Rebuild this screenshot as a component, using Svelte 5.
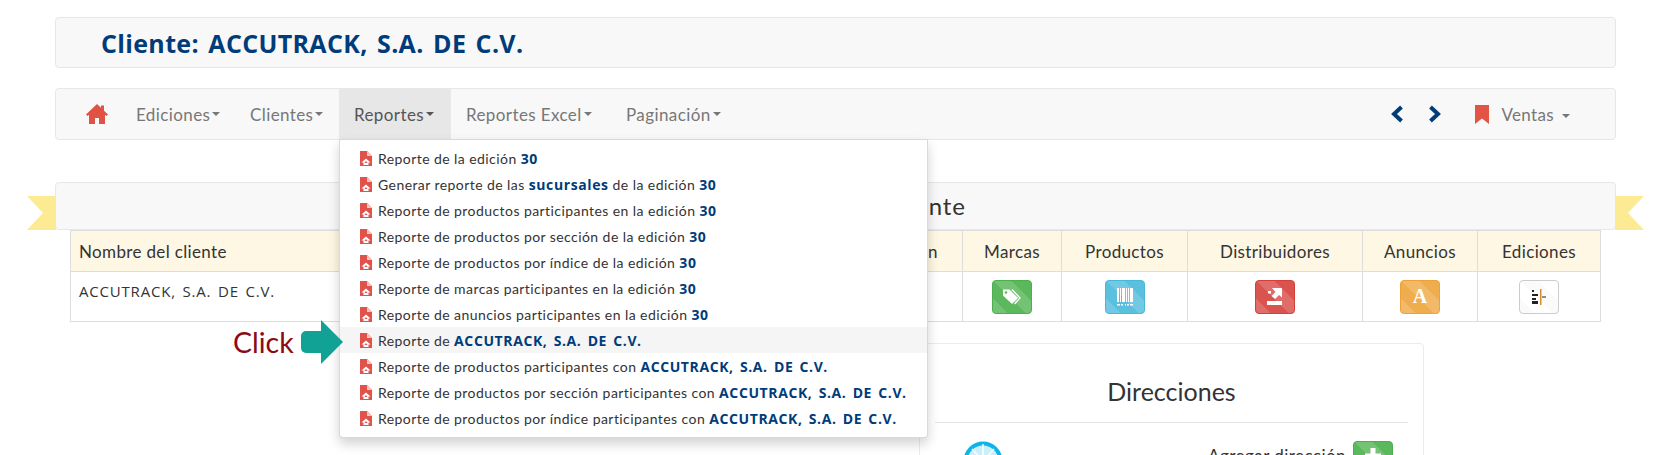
<script lang="ts">
  const cliente = 'ACCUTRACK, S.A. DE C.V.';
  const menu = [
    { label: 'Ediciones', w: 114 },
    { label: 'Clientes', w: 104 },
    { label: 'Reportes', w: 112 },
    { label: 'Reportes Excel', w: 160 },
    { label: 'Paginación', w: 119 }
  ];
  // each row: plain text, bold text, plain text, bold text
  const reportes = [
    ['Reporte de la edición ', '30', '', ''],
    ['Generar reporte de las ', 'sucursales', ' de la edición ', '30'],
    ['Reporte de productos participantes en la edición ', '30', '', ''],
    ['Reporte de productos por sección de la edición ', '30', '', ''],
    ['Reporte de productos por índice de la edición ', '30', '', ''],
    ['Reporte de marcas participantes en la edición ', '30', '', ''],
    ['Reporte de anuncios participantes en la edición ', '30', '', ''],
    ['Reporte de ', cliente, '', ''],
    ['Reporte de productos participantes con ', cliente, '', ''],
    ['Reporte de productos por sección participantes con ', cliente, '', ''],
    ['Reporte de productos por índice participantes con ', cliente, '', '']
  ];
  const columnas = [
    { titulo: 'Marcas', w: 99, btn: 'green', icon: 'tags' },
    { titulo: 'Productos', w: 126, btn: 'blue', icon: 'barcode' },
    { titulo: 'Distribuidores', w: 175, btn: 'red', icon: 'dist' },
    { titulo: 'Anuncios', w: 115, btn: 'orange', icon: 'ad' },
    { titulo: 'Ediciones', w: 123, btn: 'plain', icon: 'ed' }
  ];
</script>

<div class="page">
  <header class="panel title-panel">
    <h1>Cliente: {cliente}</h1>
  </header>

  <nav class="panel navbar">
    <ul class="nav-left">
      <li class="home">
        <svg width="22" height="22" viewBox="0 0 22 22" aria-hidden="true">
          <path fill="#e05244" d="M11 1 0 11.500l1.500 1.500L3 11.700V21h6v-6h4v6h6v-9.300l1.500 1.300L22 11.500 18 7.700V2.500h-3v2.300Z" />
        </svg>
      </li>
      {#each menu as item}
        <li class:active={item.label === 'Reportes'} style="width: {item.w}px">
          {item.label}<span class="caret"></span>
          {#if item.label === 'Reportes'}
            <ul class="dropdown">
              {#each reportes as [antes, fuerte, despues, fin]}
                <li class:hover={fuerte === cliente && antes === 'Reporte de '}>
                  <svg class="pdf" width="12" height="15" viewBox="0 0 12 15" aria-hidden="true">
                    <path fill="#e0524a" d="M0 0h7l5 5v10H0Z" />
                    <path fill="#f7c4bf" d="M7 0v5h5Z" />
                    <path fill="#fff" d="M6 7.500 10.500 11.500H8.500V14H3.500V11.500H1.500Z" />
                    <path fill="#e0524a" d="M6 10 7.500 12H4.500Z" />
                  </svg>
                  <span>{antes}<b>{fuerte}</b>{despues}<b>{fin}</b></span>
                </li>
              {/each}
            </ul>
          {/if}
        </li>
      {/each}
    </ul>
    <div class="nav-right">
      <svg class="chevron" width="14" height="20" viewBox="0 0 14 20" aria-hidden="true">
        <path fill="none" stroke="#003c7a" stroke-width="4" d="M11.500 3 4 10l7.500 7" />
      </svg>
      <svg class="chevron" width="14" height="20" viewBox="0 0 14 20" aria-hidden="true">
        <path fill="none" stroke="#003c7a" stroke-width="4" d="m2.500 3 7.500 7-7.500 7" />
      </svg>
      <svg class="bookmark" width="14" height="19" viewBox="0 0 14 19" aria-hidden="true">
        <path fill="#e25545" d="M0 0h14v19L7 13.500 0 19Z" />
      </svg>
      <span class="ventas">Ventas<span class="caret wide"></span></span>
    </div>
  </nav>

  <section class="panel ribbon-panel">
    <h2>Información del cliente</h2>
  </section>

  <table>
    <thead>
      <tr>
        <th class="name">Nombre del cliente</th>
        <th class="hidden-col">Sección</th>
        {#each columnas as col}
          <th style="width: {col.w}px">{col.titulo}</th>
        {/each}
      </tr>
    </thead>
    <tbody>
      <tr>
        <td class="name">{cliente}</td>
        <td></td>
        {#each columnas as col}
          <td class="center">
            <span class="btn {col.btn}">
              {#if col.icon === 'tags'}
                <svg width="20" height="18" viewBox="0 0 20 18" aria-hidden="true">
                  <path fill="#fff" d="M1 1.500h6.500L16 10l-6 6-9-8.500Z" />
                  <circle cx="4" cy="4.500" r="1.300" fill="#5cb85c" />
                  <path fill="none" stroke="#fff" stroke-width="1.300" d="M10 1.500l8 8.500-5.500 6" />
                </svg>
              {:else if col.icon === 'barcode'}
                <svg width="18" height="20" viewBox="0 0 18 20" aria-hidden="true">
                  <path fill="#fff" d="M1 1h2v14H1Zm3 0h1v14H4Zm2 0h3v14H6Zm4 0h1v14h-1Zm2 0h1v14h-1Zm2 0h3v14h-3ZM1 17h3v1.500H1Zm4 0h2v1.500H5Zm4 0h1v1.500H9Zm2 0h2v1.500h-2Zm3 0h3v1.500h-3Z" />
                </svg>
              {:else if col.icon === 'dist'}
                <svg width="20" height="20" viewBox="0 0 20 20" aria-hidden="true">
                  <path fill="#fff" d="M7 1h10v9.500l-3-2.500-4 4-3.500-3 4-4ZM2 14h15v4H2Z" />
                  <rect x="3" y="4" width="3" height="2.500" fill="#fff" />
                </svg>
              {:else if col.icon === 'ad'}
                <span class="letter">A</span>
              {:else}
                <svg width="16" height="16" viewBox="0 0 16 16" aria-hidden="true">
                  <path fill="#222" d="M1 1h2v2H1Zm0 4h6v2H1Zm0 4h4v2H1Zm0 3h6v3H1Z" />
                  <rect x="9" y="0" width="1.500" height="16" fill="#d98a2b" />
                  <path fill="#222" d="M11 7.500h4v1h-4Z" />
                </svg>
              {/if}
            </span>
          </td>
        {/each}
      </tr>
    </tbody>
  </table>

  <div class="click-hint">
    <span>Click</span>
    <svg width="42" height="44" viewBox="0 0 42 44" aria-hidden="true">
      <path fill="#12a195" d="M20 0 42 22 20 44V33H5a5 5 0 0 1-5-5V16a5 5 0 0 1 5-5h15Z" />
    </svg>
  </div>

  <section class="card">
    <h3>Direcciones</h3>
    <hr />
    <div class="card-row">
      <svg class="globe" width="40" height="40" viewBox="0 0 40 40" aria-hidden="true">
        <circle cx="20" cy="20" r="17.500" fill="#c9effb" stroke="#0db4e8" stroke-width="4" />
        <path fill="none" stroke="#fff" stroke-width="1.500" d="M20 3v34M3 20h34M9 8l22 24M31 8 9 32" />
      </svg>
      <div class="add">
        <span>Agregar dirección</span>
        <span class="btn green add-btn">
          <svg width="16" height="16" viewBox="0 0 16 16" aria-hidden="true">
            <path fill="#fff" d="M5.500 0h5v5.500H16v5h-5.500V16h-5v-5.500H0v-5h5.500Z" />
          </svg>
        </span>
      </div>
    </div>
  </section>
</div>

<style>
  :global(body) {
    background: #fff;
  }

  .page {
    position: relative;
    box-sizing: border-box;
    height: 455px;
    padding: 17px 56px 0 55px;
    overflow: hidden;
    color: #333;
    font-family: Lato, sans-serif;
    font-size: 14px;
  }

  .panel {
    box-sizing: border-box;
    border: 1px solid #e7e7e7;
    border-radius: 4px;
    background: #f8f8f8;
  }

  .title-panel {
    display: flex;
    align-items: center;
    height: 51px;
    padding-left: 45px;
  }

  h1 {
    margin: 0;
    color: #003c7a;
    font-family: 'Open Sans', sans-serif;
    font-size: 25px;
    font-weight: 700;
    letter-spacing: 0.35px;
    word-spacing: 2.500px;
  }

  .navbar {
    display: flex;
    justify-content: space-between;
    height: 52px;
    margin-top: 20px;
    padding: 0 45px 0 15px;
    color: #777;
    font-size: 17px;
  }

  .navbar ul {
    margin: 0;
    padding: 0;
    list-style: none;
  }

  .nav-left {
    display: flex;
  }

  .nav-left > li {
    position: relative;
    box-sizing: border-box;
    display: flex;
    align-items: center;
    padding: 0 15px;
    letter-spacing: 0.4px;
    white-space: nowrap;
  }

  .nav-left > li.home {
    padding: 0 12px 0 15px;
    width: 50px;
  }

  .nav-left > li.active {
    background: #e7e7e7;
    color: #555;
  }

  .caret {
    display: inline-block;
    margin-left: 2px;
    border-top: 4px solid currentColor;
    border-right: 4px solid transparent;
    border-left: 4px solid transparent;
    vertical-align: middle;
  }

  .caret.wide {
    margin-left: 8px;
  }

  .dropdown {
    position: absolute;
    top: 100%;
    left: 0;
    z-index: 5;
    box-sizing: border-box;
    width: 589px;
    padding: 5px 0 6px !important;
    border: 1px solid rgba(0, 0, 0, 0.15);
    border-radius: 0 0 4px 4px;
    background: #fff;
    box-shadow: 0 6px 12px rgba(0, 0, 0, 0.175);
    color: #333;
    font-size: 14px;
    letter-spacing: 0.43px;
  }

  .dropdown li {
    display: flex;
    align-items: center;
    gap: 6px;
    height: 26px;
    padding-left: 20px;
  }

  .dropdown li.hover {
    background: #f5f5f5;
  }

  .dropdown b {
    color: #003c7a;
    font-family: 'Open Sans', sans-serif;
    font-size: 14px;
    font-weight: 700;
    letter-spacing: 0.6px;
    word-spacing: 2px;
  }

  .nav-right {
    display: flex;
    align-items: center;
  }

  .chevron {
    margin-right: 24px;
  }

  .bookmark {
    margin-left: 9px;
    margin-right: 12px;
  }

  .ventas {
    letter-spacing: 0.35px;
  }

  .ribbon-panel {
    position: relative;
    display: flex;
    align-items: center;
    justify-content: center;
    height: 48px;
    margin-top: 42px;
    padding-bottom: 2px;
  }

  .ribbon-panel::before,
  .ribbon-panel::after {
    content: '';
    position: absolute;
    top: 13px;
    bottom: -1px;
    width: 29px;
    background: #fdeb93;
  }

  .ribbon-panel::before {
    left: -29px;
    clip-path: polygon(0 0, 100% 0, 100% 100%, 0 100%, 55% 50%);
  }

  .ribbon-panel::after {
    right: -29px;
    clip-path: polygon(0 0, 100% 0, 45% 50%, 100% 100%, 0 100%);
  }

  h2 {
    margin: 0;
    font-family: Lato, sans-serif;
    font-size: 24px;
    font-weight: 400;
    letter-spacing: 0.9px;
  }

  table {
    width: 1530px;
    margin: 0 0 0 15px;
    border-collapse: collapse;
    table-layout: fixed;
    font-size: 17px;
  }

  th,
  td {
    box-sizing: border-box;
    border: 1px solid #ddd;
    padding: 0 8px;
  }

  th {
    height: 41px;
    background: #fdf7e3;
    font-weight: 400;
    letter-spacing: 0.35px;
  }

  td {
    height: 50px;
  }

  th.name,
  td.name {
    width: 783px;
    text-align: left;
  }

  td.name {
    vertical-align: top;
    padding-top: 9px;
    font-family: 'Open Sans', sans-serif;
    font-size: 15px;
    letter-spacing: 0.8px;
    word-spacing: 2px;
  }

  .hidden-col {
    width: 109px;
  }

  .center {
    text-align: center;
  }

  .btn {
    box-sizing: border-box;
    display: inline-flex;
    align-items: center;
    justify-content: center;
    width: 40px;
    height: 34px;
    border: 1px solid;
    border-radius: 4px;
    background-image: linear-gradient(
      45deg,
      rgba(255, 255, 255, 0.15) 25%,
      transparent 25%,
      transparent 50%,
      rgba(255, 255, 255, 0.15) 50%,
      rgba(255, 255, 255, 0.15) 75%,
      transparent 75%
    );
    background-size: 36px 36px;
    vertical-align: middle;
  }

  .green {
    border-color: #4cae4c;
    background-color: #5cb85c;
  }

  .blue {
    border-color: #46b8da;
    background-color: #5bc0de;
  }

  .red {
    border-color: #d43f3a;
    background-color: #d9534f;
  }

  .orange {
    border-color: #eea236;
    background-color: #f0ad4e;
  }

  .plain {
    border-color: #ccc;
    background-color: #fff;
    background-image: linear-gradient(
      45deg,
      rgba(0, 0, 0, 0.02) 25%,
      transparent 25%,
      transparent 50%,
      rgba(0, 0, 0, 0.02) 50%,
      rgba(0, 0, 0, 0.02) 75%,
      transparent 75%
    );
  }

  .letter {
    color: #fff;
    font-family: 'Liberation Serif', serif;
    font-size: 20px;
    font-weight: 700;
  }

  .click-hint {
    position: absolute;
    top: 320px;
    left: 233px;
    z-index: 6;
    display: flex;
    align-items: center;
    gap: 7px;
    color: #8b0a14;
    font-family: Lato, sans-serif;
    font-size: 28.500px;
  }

  .card {
    box-sizing: border-box;
    width: 505px;
    height: 200px;
    margin: 21px 0 0 864px;
    padding: 30px 15px 0;
    border: 1px solid #faebcc;
    border-radius: 4px;
  }

  h3 {
    margin: 0;
    font-family: Lato, sans-serif;
    font-size: 25px;
    font-weight: 400;
    line-height: 34px;
    text-align: center;
  }

  hr {
    margin: 14px 0 15px;
    border: 0;
    border-top: 1px solid #e5e5e5;
  }

  .card-row {
    display: flex;
    justify-content: space-between;
    align-items: flex-start;
    padding: 3px 15px 0 28px;
  }

  .add {
    display: flex;
    align-items: flex-start;
    gap: 7px;
    font-size: 17px;
    letter-spacing: 0.45px;
  }

  .add span:first-child {
    padding-top: 4px;
  }

  .add-btn {
    align-items: flex-start;
    width: 40px;
    height: 40px;
    padding-top: 6px;
  }
</style>
